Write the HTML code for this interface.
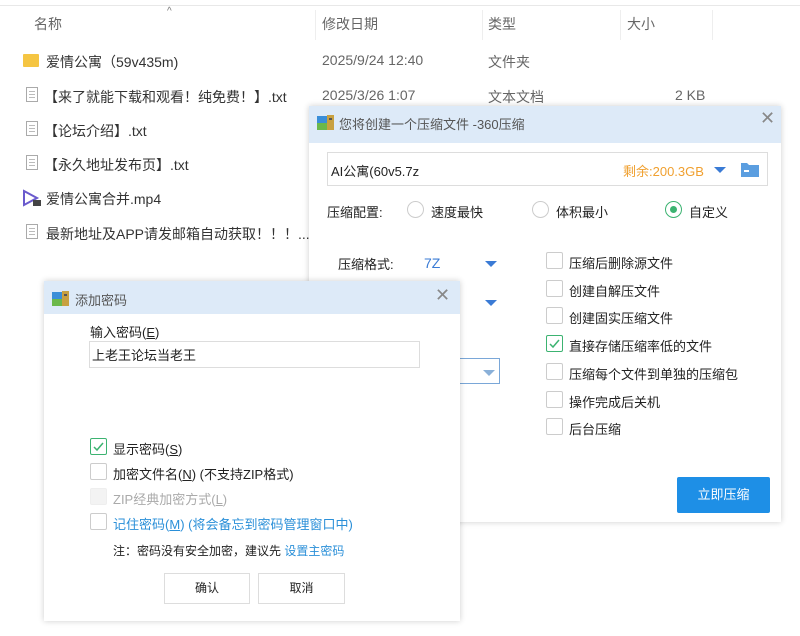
<!DOCTYPE html>
<html><head><meta charset="utf-8"><style>
*{margin:0;padding:0;box-sizing:border-box}
body{width:800px;height:636px;background:#fff;position:relative;overflow:hidden;font-family:"Liberation Sans","Noto Sans CJK SC",sans-serif;font-size:13px;color:#222}
.a{position:absolute;white-space:nowrap}
.e{font-size:14px;color:#333}
.g{color:#666}
.doc{position:absolute;width:12px;height:15px;border:1px solid #aaa;background:#fff}
.doc i{position:absolute;left:2px;right:2px;height:1px;background:#bbb}
.cb{position:absolute;width:17px;height:17px;border:1px solid #ccc;background:#fff;border-radius:2px}
.cb.on{border-color:#3cb371}
.rd{position:absolute;width:17px;height:17px;border:1px solid #ccc;border-radius:50%}
.tri{position:absolute;width:0;height:0;border-left:6px solid transparent;border-right:6px solid transparent;border-top:6px solid #3a7bd5}
</style></head><body>
<div class="a" style="left:0;top:0;width:800px;height:6px;border-bottom:1px solid #e8e8e8"></div>
<div class="a" style="left:167px;top:6px;font-size:10px;color:#777">^</div>
<div class="a e g" style="left:34px;top:14px">名称</div>
<div class="a" style="left:315px;top:10px;width:1px;height:30px;background:#eee"></div>
<div class="a e g" style="left:322px;top:14px">修改日期</div>
<div class="a" style="left:482px;top:10px;width:1px;height:30px;background:#eee"></div>
<div class="a e g" style="left:488px;top:14px">类型</div>
<div class="a" style="left:620px;top:10px;width:1px;height:30px;background:#eee"></div>
<div class="a e g" style="left:627px;top:14px">大小</div>
<div class="a" style="left:712px;top:10px;width:1px;height:30px;background:#eee"></div>

<div class="a" style="left:23px;top:54px;width:16px;height:13px;background:#f5c542;border-radius:1px"></div>
<div class="a e" style="left:46px;top:52px">爱情公寓（59v435m)</div>
<div class="a e g" style="left:322px;top:52px">2025/9/24 12:40</div>
<div class="a e g" style="left:488px;top:52px">文件夹</div>

<div class="doc" style="left:26px;top:87px"><i style="top:3px"></i><i style="top:6px"></i><i style="top:9px"></i></div>
<div class="a e" style="left:44px;top:87px">【来了就能下载和观看！纯免费！】.txt</div>
<div class="a e g" style="left:322px;top:87px">2025/3/26 1:07</div>
<div class="a e g" style="left:488px;top:87px">文本文档</div>
<div class="a e g" style="left:675px;top:87px">2 KB</div>

<div class="doc" style="left:26px;top:121px"><i style="top:3px"></i><i style="top:6px"></i><i style="top:9px"></i></div>
<div class="a e" style="left:44px;top:121px">【论坛介绍】.txt</div>
<div class="doc" style="left:26px;top:155px"><i style="top:3px"></i><i style="top:6px"></i><i style="top:9px"></i></div>
<div class="a e" style="left:44px;top:155px">【永久地址发布页】.txt</div>
<svg class="a" style="left:22px;top:189px" width="20" height="18"><path d="M2 2 L15 9 L2 16 Z" fill="none" stroke="#6a5acd" stroke-width="2"/><rect x="11" y="11" width="8" height="6" fill="#444"/></svg>
<div class="a e" style="left:46px;top:189px">爱情公寓合并.mp4</div>
<div class="doc" style="left:26px;top:224px"><i style="top:3px"></i><i style="top:6px"></i><i style="top:9px"></i></div>
<div class="a e" style="left:46px;top:224px">最新地址及APP请发邮箱自动获取！！！...</div>

<!-- 360 dialog -->
<div class="a" style="left:309px;top:106px;width:472px;height:416px;background:#fff;box-shadow:0 0 6px rgba(0,0,0,.2)">
<div style="height:37px;background:#ddeaf8"></div>
</div>
<svg class="a" style="left:317px;top:113px" width="18" height="18"><rect x="0" y="3" width="12" height="14" fill="#3a8ed8"/><rect x="0" y="10" width="12" height="7" fill="#6bb84a"/><rect x="10" y="2" width="7" height="15" fill="#c8a040"/><rect x="12" y="5" width="3" height="2" fill="#555"/></svg>
<div class="a" style="left:339px;top:114px;font-size:13px;color:#555">您将创建一个压缩文件 -360压缩</div>
<div class="a" style="left:760px;top:108px;font-size:18px;color:#888">✕</div>
<div class="a" style="left:327px;top:152px;width:441px;height:34px;border:1px solid #ddd"></div>
<div class="a" style="left:331px;top:161px;font-size:13px">AI公寓(60v5.7z</div>
<div class="a" style="left:623px;top:161px;font-size:13px;color:#f0a030">剩余:200.3GB</div>
<div class="tri" style="left:714px;top:167px"></div>
<svg class="a" style="left:741px;top:161px" width="18" height="16"><path d="M0 2 h6 l2 2 h10 v12 h-18z" fill="#5b9ee0"/><rect x="3" y="9" width="5" height="2" fill="#fff"/></svg>
<div class="a" style="left:327px;top:202px;font-size:13px">压缩配置:</div>
<div class="rd" style="left:407px;top:201px"></div><div class="a" style="left:431px;top:202px">速度最快</div>
<div class="rd" style="left:532px;top:201px"></div><div class="a" style="left:556px;top:202px">体积最小</div>
<div class="rd" style="left:665px;top:201px;border-color:#3cb371"><div style="position:absolute;left:4px;top:4px;width:7px;height:7px;border-radius:50%;background:#3cb371"></div></div>
<div class="a" style="left:689px;top:202px">自定义</div>
<div class="a" style="left:338px;top:254px">压缩格式:</div>
<div class="a" style="left:424px;top:255px;color:#3a7bd5;font-size:14px">7Z</div>
<div class="tri" style="left:485px;top:261px"></div>
<div class="tri" style="left:485px;top:300px"></div>
<div class="a" style="left:459px;top:358px;width:41px;height:26px;border:1px solid #7aa7d8;border-left:none"></div>
<div class="tri" style="left:483px;top:370px;border-top-color:#8ab0d8"></div>
<div class="cb" style="left:546px;top:252px"></div><div class="a" style="left:569px;top:253px">压缩后删除源文件</div>
<div class="cb" style="left:546px;top:280px"></div><div class="a" style="left:569px;top:281px">创建自解压文件</div>
<div class="cb" style="left:546px;top:307px"></div><div class="a" style="left:569px;top:308px">创建固实压缩文件</div>
<div class="cb on" style="left:546px;top:335px"><svg width="15" height="15" style="position:absolute;left:0;top:0"><path d="M3 8 L6 11 L12 4" fill="none" stroke="#3cb371" stroke-width="1.5"/></svg></div><div class="a" style="left:569px;top:336px">直接存储压缩率低的文件</div>
<div class="cb" style="left:546px;top:363px"></div><div class="a" style="left:569px;top:364px">压缩每个文件到单独的压缩包</div>
<div class="cb" style="left:546px;top:391px"></div><div class="a" style="left:569px;top:392px">操作完成后关机</div>
<div class="cb" style="left:546px;top:418px"></div><div class="a" style="left:569px;top:419px">后台压缩</div>
<div class="a" style="left:677px;top:477px;width:93px;height:36px;background:#1e8fe6;border-radius:2px;color:#fff;text-align:center;line-height:36px;font-size:13px">立即压缩</div>

<!-- password dialog -->
<div class="a" style="left:44px;top:281px;width:416px;height:340px;background:#fff;box-shadow:0 0 6px rgba(0,0,0,.2)">
<div style="height:33px;background:#ddeaf8"></div>
</div>
<svg class="a" style="left:52px;top:289px" width="18" height="18"><rect x="0" y="3" width="12" height="14" fill="#3a8ed8"/><rect x="0" y="10" width="12" height="7" fill="#6bb84a"/><rect x="10" y="2" width="7" height="15" fill="#c8a040"/><rect x="12" y="5" width="3" height="2" fill="#555"/></svg>
<div class="a" style="left:75px;top:290px;color:#555">添加密码</div>
<div class="a" style="left:435px;top:285px;font-size:18px;color:#888">✕</div>
<div class="a" style="left:90px;top:322px">输入密码(<u>E</u>)</div>
<div class="a" style="left:89px;top:341px;width:331px;height:27px;border:1px solid #ddd"></div>
<div class="a" style="left:92px;top:345px">上老王论坛当老王</div>
<div class="cb on" style="left:90px;top:438px"><svg width="15" height="15" style="position:absolute;left:0;top:0"><path d="M3 8 L6 11 L12 4" fill="none" stroke="#3cb371" stroke-width="1.5"/></svg></div>
<div class="a" style="left:113px;top:439px">显示密码(<u>S</u>)</div>
<div class="cb" style="left:90px;top:463px"></div>
<div class="a" style="left:113px;top:464px">加密文件名(<u>N</u>) (不支持ZIP格式)</div>
<div class="cb" style="left:90px;top:488px;background:#f3f3f3;border-color:#eee"></div>
<div class="a" style="left:113px;top:489px;color:#aaa">ZIP经典加密方式(<u>L</u>)</div>
<div class="cb" style="left:90px;top:513px"></div>
<div class="a" style="left:113px;top:514px;color:#2a8fd8">记住密码(<u>M</u>) (将会备忘到密码管理窗口中)</div>
<div class="a" style="left:113px;top:542px;font-size:12px">注：密码没有安全加密，建议先 <span style="color:#2a8fd8">设置主密码</span></div>
<div class="a" style="left:164px;top:573px;width:86px;height:31px;border:1px solid #ddd;text-align:center;line-height:29px;font-size:12px">确认</div>
<div class="a" style="left:258px;top:573px;width:87px;height:31px;border:1px solid #ddd;text-align:center;line-height:29px;font-size:12px">取消</div>
</body></html>
